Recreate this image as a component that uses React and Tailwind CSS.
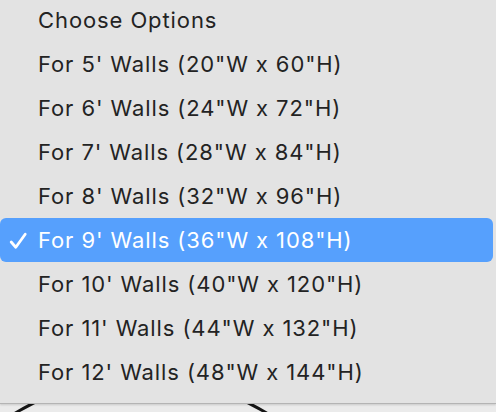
const options = [
  "Choose Options",
  "For 5' Walls (20\"W x 60\"H)",
  "For 6' Walls (24\"W x 72\"H)",
  "For 7' Walls (28\"W x 84\"H)",
  "For 8' Walls (32\"W x 96\"H)",
  "For 9' Walls (36\"W x 108\"H)",
  "For 10' Walls (40\"W x 120\"H)",
  "For 11' Walls (44\"W x 132\"H)",
  "For 12' Walls (48\"W x 144\"H)",
];

const selected = 5;

export default function App() {
  return (
    <div className="relative w-[496px] h-[412px] overflow-hidden bg-[#ebebeb] font-['Inter',sans-serif]">
      {/* button peeking out under the menu */}
      <div className="absolute left-[-100px] top-[376px] w-[482px] h-[482px] rounded-full border-[3px] border-[#151515]" />

      <div className="absolute inset-x-0 top-0 h-[404px] bg-[#e3e3e3] border-b border-[#b4b4b4] shadow-[0_1px_2px_rgba(0,0,0,0.15)]">
        <ul className="mt-[-2px] pr-[3px]">
          {options.map((label, i) => (
            <li
              key={label}
              className={`relative flex items-center h-[44px] pl-[38px] text-[22px] tracking-[0.9px] ${
                i === selected
                  ? "bg-[#56a0fd] text-white rounded-[6px]"
                  : "text-[#232323]"
              }`}
            >
              {i === selected && (
                <svg
                  className="absolute left-[9px] top-[14px]"
                  width="19"
                  height="18"
                  viewBox="0 0 19 18"
                  fill="none"
                >
                  <path
                    d="M2.2 10 L6.8 15.2 L16.2 2.2"
                    stroke="white"
                    strokeWidth="2.8"
                    strokeLinecap="round"
                    strokeLinejoin="round"
                  />
                </svg>
              )}
              {label}
            </li>
          ))}
        </ul>
      </div>
    </div>
  );
}
